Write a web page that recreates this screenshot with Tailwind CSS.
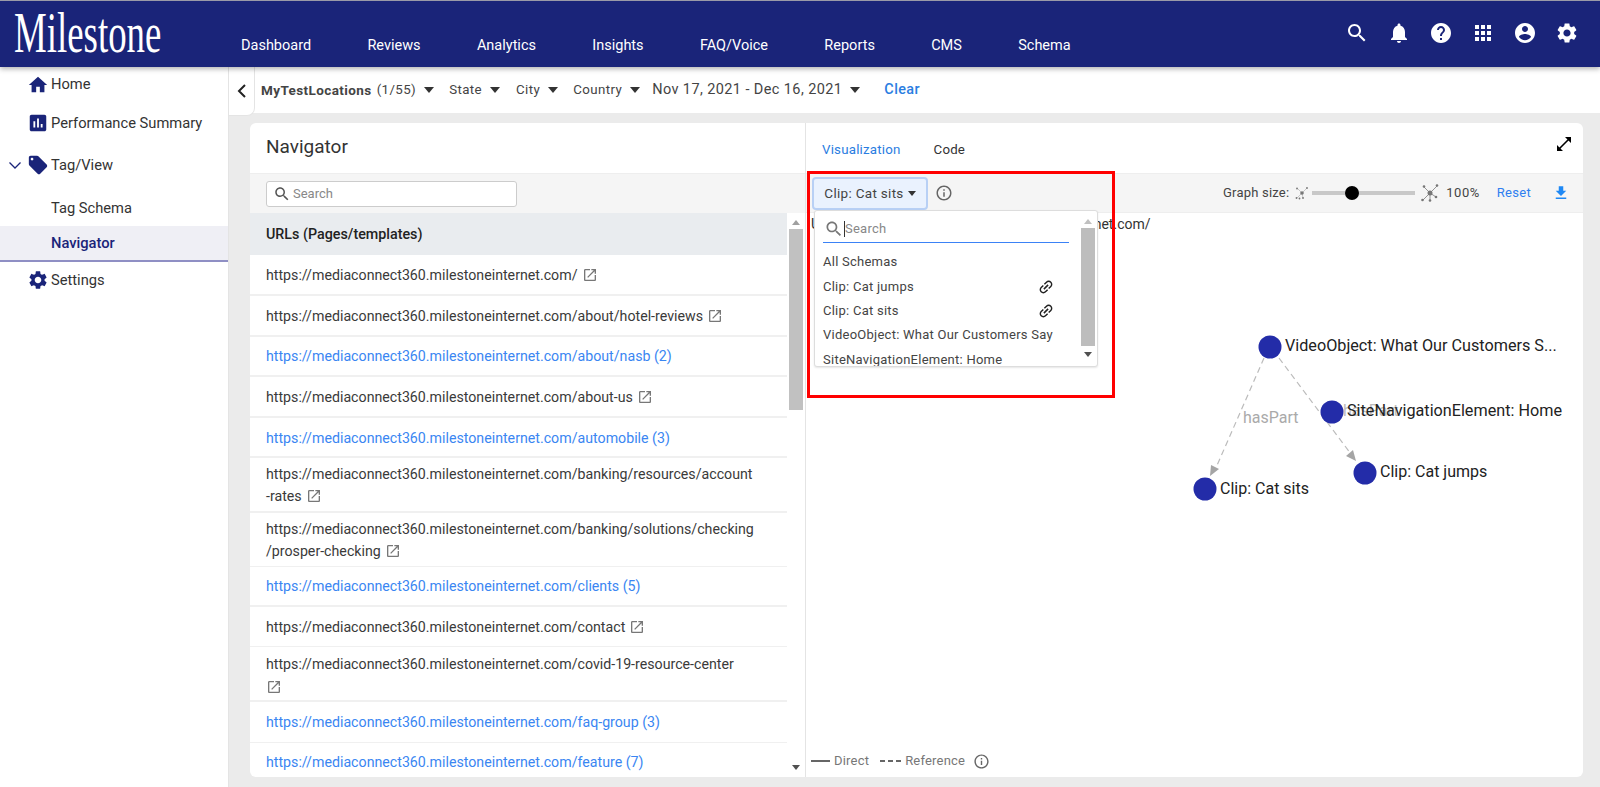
<!DOCTYPE html>
<html lang="en">

<head>
    <meta charset="UTF-8">
    <meta name="viewport" content="width=device-width, initial-scale=1.0">
    <title>Milestone - Navigator</title>
    <script src="https://cdn.jsdelivr.net/npm/@tailwindcss/browser@4"></script>
</head>

<body class="h-[787px] overflow-hidden bg-[#ebebeb] font-[Roboto,sans-serif] text-[#333]">
    <!-- Top bar -->
    <header class="relative z-20 h-[67px] bg-[#1a2479] border-t border-[#9a9aa8] shadow-[0_2px_5px_rgba(0,0,0,0.3)] flex text-white">
        <div class="w-[241px] shrink-0 pl-[14px] pt-[1px]">
            <div class="w-[232px] text-[58px] leading-[62px] font-['Liberation_Serif',serif] origin-left scale-x-[0.635] whitespace-nowrap">Milestone</div>
        </div>
        <nav class="flex gap-[56.3px] pt-[35px] text-[14.5px] leading-[20px]">
            <span>Dashboard</span>
            <span>Reviews</span>
            <span>Analytics</span>
            <span>Insights</span>
            <span>FAQ/Voice</span>
            <span>Reports</span>
            <span>CMS</span>
            <span>Schema</span>
        </nav>
        <div class="ml-auto flex gap-[18px] pt-[20px] pr-[21px]">
            <svg class="w-6 h-6 fill-white" viewBox="0 0 24 24"><path d="M15.5 14h-.79l-.28-.27C15.41 12.59 16 11.11 16 9.5 16 5.91 13.09 3 9.5 3S3 5.91 3 9.5 5.91 16 9.5 16c1.61 0 3.09-.59 4.23-1.57l.27.28v.79l5 4.99L20.49 19l-4.99-5zm-6 0C7.01 14 5 11.99 5 9.5S7.01 5 9.5 5 14 7.01 14 9.5 11.99 14 9.5 14z"/></svg>
            <svg class="w-6 h-6 fill-white" viewBox="0 0 24 24"><path d="M12 22c1.1 0 2-.9 2-2h-4c0 1.1.89 2 2 2zm6-6v-5c0-3.07-1.64-5.64-4.5-6.32V4c0-.83-.67-1.5-1.5-1.5s-1.5.67-1.5 1.5v.68C7.63 5.36 6 7.92 6 11v5l-2 2v1h16v-1l-2-2z"/></svg>
            <svg class="w-6 h-6 fill-white" viewBox="0 0 24 24"><path d="M12 2C6.48 2 2 6.48 2 12s4.48 10 10 10 10-4.48 10-10S17.52 2 12 2zm1 17h-2v-2h2v2zm2.07-7.75l-.9.92C13.45 12.9 13 13.5 13 15h-2v-.5c0-1.1.45-2.1 1.17-2.83l1.24-1.26c.37-.36.59-.86.59-1.41 0-1.1-.9-2-2-2s-2 .9-2 2H8c0-2.21 1.79-4 4-4s4 1.79 4 4c0 .88-.36 1.68-.93 2.25z"/></svg>
            <svg class="w-6 h-6 fill-white" viewBox="0 0 24 24"><path d="M4 8h4V4H4v4zm6 12h4v-4h-4v4zm-6 0h4v-4H4v4zm0-6h4v-4H4v4zm6 0h4v-4h-4v4zm6-10v4h4V4h-4zm-6 4h4V4h-4v4zm6 6h4v-4h-4v4zm0 6h4v-4h-4v4z"/></svg>
            <svg class="w-6 h-6 fill-white" viewBox="0 0 24 24"><path d="M12 2C6.48 2 2 6.48 2 12s4.48 10 10 10 10-4.48 10-10S17.52 2 12 2zm0 3c1.66 0 3 1.34 3 3s-1.34 3-3 3-3-1.34-3-3 1.34-3 3-3zm0 14.2c-2.5 0-4.71-1.28-6-3.22.03-1.99 4-3.08 6-3.08 1.99 0 5.97 1.09 6 3.08-1.29 1.94-3.5 3.22-6 3.22z"/></svg>
            <svg class="w-6 h-6 fill-white" viewBox="0 0 24 24"><path d="M19.14 12.94c.04-.3.06-.61.06-.94 0-.32-.02-.64-.07-.94l2.03-1.58c.18-.14.23-.41.12-.61l-1.92-3.32c-.12-.22-.37-.29-.59-.22l-2.39.96c-.5-.38-1.03-.7-1.62-.94l-.36-2.54c-.04-.24-.24-.41-.48-.41h-3.84c-.24 0-.43.17-.47.41l-.36 2.54c-.59.24-1.13.57-1.62.94l-2.39-.96c-.22-.08-.47 0-.59.22L2.74 8.87c-.12.21-.08.47.12.61l2.03 1.58c-.05.3-.09.63-.09.94s.02.64.07.94l-2.03 1.58c-.18.14-.23.41-.12.61l1.92 3.32c.12.22.37.29.59.22l2.39-.96c.5.38 1.03.7 1.62.94l.36 2.54c.05.24.24.41.48.41h3.84c.24 0 .44-.17.47-.41l.36-2.54c.59-.24 1.13-.56 1.62-.94l2.39.96c.22.08.47 0 .59-.22l1.92-3.32c.12-.22.07-.47-.12-.61l-2.01-1.58zM12 15.6c-1.98 0-3.6-1.62-3.6-3.6s1.62-3.6 3.6-3.6 3.6 1.62 3.6 3.6-1.62 3.6-3.6 3.6z"/></svg>
        </div>
    </header>

    <div class="flex h-[720px]">
        <!-- Sidebar -->
        <aside class="relative z-10 w-[229px] shrink-0 bg-white border-r border-[#e4e4e4] text-[14.7px] text-[#333]">
            <div class="h-[36px] pb-[1px] pl-[27px] flex items-center gap-[2px]">
                <svg class="w-[22px] h-[22px] fill-[#1a2479]" viewBox="0 0 24 24"><path d="M10 20v-6h4v6h5v-8h3L12 3 2 12h3v8z"/></svg>
                <span>Home</span>
            </div>
            <div class="h-[40px] pl-[27px] flex items-center gap-[2px]">
                <svg class="w-[22px] h-[22px] fill-[#1a2479]" viewBox="0 0 24 24"><path d="M19 3H5c-1.1 0-2 .9-2 2v14c0 1.1.9 2 2 2h14c1.1 0 2-.9 2-2V5c0-1.1-.9-2-2-2zM9 17H7v-7h2v7zm4 0h-2V7h2v10zm4 0h-2v-4h2v4z"/></svg>
                <span>Performance Summary</span>
            </div>
            <div class="h-[44px] pl-[8px] flex items-center">
                <svg class="w-[14px] h-[14px] stroke-[#1a2479] fill-none" viewBox="0 0 14 14"><path d="M1.5 4.5 7 10l5.5-5.5" stroke-width="1.3"/></svg>
                <svg class="ml-[5px] w-[22px] h-[22px] fill-[#1a2479]" viewBox="0 0 24 24"><path d="M21.41 11.58l-9-9C12.05 2.22 11.55 2 11 2H4c-1.1 0-2 .9-2 2v7c0 .55.22 1.05.59 1.42l9 9c.36.36.86.58 1.41.58.55 0 1.05-.22 1.41-.59l7-7c.37-.36.59-.86.59-1.41 0-.55-.23-1.06-.59-1.42zM5.5 7C4.67 7 4 6.33 4 5.5S4.67 4 5.5 4 7 4.67 7 5.5 6.33 7 5.5 7z"/></svg>
                <span class="ml-[2px]">Tag/View</span>
            </div>
            <div class="h-[39px] pt-[4px] pl-[51px] flex items-center">Tag Schema</div>
            <div class="h-[36px] pt-[1px] pl-[51px] flex items-center bg-[#efeff5] border-b-2 border-[#8f8fc4] text-[#1a2479] font-medium">Navigator</div>
            <div class="h-[36px] pl-[27px] flex items-center gap-[2px]">
                <svg class="w-[22px] h-[22px] fill-[#1a2479]" viewBox="0 0 24 24"><path d="M19.14 12.94c.04-.3.06-.61.06-.94 0-.32-.02-.64-.07-.94l2.03-1.58c.18-.14.23-.41.12-.61l-1.92-3.32c-.12-.22-.37-.29-.59-.22l-2.39.96c-.5-.38-1.03-.7-1.62-.94l-.36-2.54c-.04-.24-.24-.41-.48-.41h-3.84c-.24 0-.43.17-.47.41l-.36 2.54c-.59.24-1.13.57-1.62.94l-2.39-.96c-.22-.08-.47 0-.59.22L2.74 8.87c-.12.21-.08.47.12.61l2.03 1.58c-.05.3-.09.63-.09.94s.02.64.07.94l-2.03 1.58c-.18.14-.23.41-.12.61l1.92 3.32c.12.22.37.29.59.22l2.39-.96c.5.38 1.03.7 1.62.94l.36 2.54c.05.24.24.41.48.41h3.84c.24 0 .44-.17.47-.41l.36-2.54c.59-.24 1.13-.56 1.62-.94l2.39.96c.22.08.47 0 .59-.22l1.92-3.32c.12-.22.07-.47-.12-.61l-2.01-1.58zM12 15.6c-1.98 0-3.6-1.62-3.6-3.6s1.62-3.6 3.6-3.6 3.6 1.62 3.6 3.6-1.62 3.6-3.6 3.6z"/></svg>
                <span>Settings</span>
            </div>
        </aside>

        <main class="flex-1 min-w-0 relative">
            <!-- Filter bar -->
            <div class="h-[46px] bg-white flex items-center text-[13.3px] tracking-[0.4px] text-[#444]">
                <div class="w-[26px] h-[49px] self-start shrink-0 bg-white border-r border-b border-[#e4e4e4] rounded-br-[8px] flex items-center justify-center">
                    <svg class="w-[14px] h-[16px] stroke-[#222] fill-none" viewBox="0 0 14 16"><path d="M10 2 4 8l6 6" stroke-width="2"/></svg>
                </div>
                <span class="ml-[6px] font-bold text-[13.5px]">MyTestLocations</span>
                <span class="ml-[5px]">(1/55)</span>
                <span class="ml-[8px] w-0 h-0 border-x-[5px] border-x-transparent border-t-[6px] border-t-[#333]"></span>
                <span class="ml-[15px]">State</span>
                <span class="ml-[8px] w-0 h-0 border-x-[5px] border-x-transparent border-t-[6px] border-t-[#333]"></span>
                <span class="ml-[16px]">City</span>
                <span class="ml-[8px] w-0 h-0 border-x-[5px] border-x-transparent border-t-[6px] border-t-[#333]"></span>
                <span class="ml-[15px]">Country</span>
                <span class="ml-[8px] w-0 h-0 border-x-[5px] border-x-transparent border-t-[6px] border-t-[#333]"></span>
                <span class="ml-[12px] text-[14.5px]">Nov 17, 2021 - Dec 16, 2021</span>
                <span class="ml-[8px] w-0 h-0 border-x-[5px] border-x-transparent border-t-[6px] border-t-[#333]"></span>
                <span class="ml-[24px] text-[14.4px] font-medium text-[#2a7de1]">Clear</span>
            </div>

            <!-- Card -->
            <div class="ml-[21px] mr-[17px] mt-[10px] h-[654px] bg-white rounded-[6px] flex overflow-hidden">
                <!-- Navigator panel -->
                <section class="w-[556px] shrink-0 border-r border-[#e4e4e4] flex flex-col">
                    <div class="h-[50px] shrink-0 pl-[16px] pb-[2px] flex items-center text-[19px] text-[#333]">Navigator</div>
                    <div class="h-[40px] shrink-0 bg-[#f5f5f5] pl-[16px] flex items-center border-t border-[#eee]">
                        <div class="w-[251px] h-[26px] bg-white border border-[#ccc] rounded-[3px] flex items-center pl-[6px] gap-[2px] text-[13px] text-[#888]">
                            <svg class="w-[18px] h-[18px] fill-[#555]" viewBox="0 0 24 24"><path d="M15.5 14h-.79l-.28-.27C15.41 12.59 16 11.11 16 9.5 16 5.91 13.09 3 9.5 3S3 5.91 3 9.5 5.91 16 9.5 16c1.61 0 3.09-.59 4.23-1.57l.27.28v.79l5 4.99L20.49 19l-4.99-5zm-6 0C7.01 14 5 11.99 5 9.5S7.01 5 9.5 5 14 7.01 14 9.5 11.99 14 9.5 14z"/></svg>
                            <span>Search</span>
                        </div>
                    </div>
                    <div class="flex-1 min-h-0 flex">
                        <div class="w-[537px] shrink-0 text-[14.2px] text-[#3a3a3a] leading-[22px]">
                            <div class="h-[42px] bg-[#e9ecef] pl-[16px] flex items-center font-medium text-[14.3px] text-[#222]">URLs (Pages/templates)</div>
                            <div class="h-[41px] pl-[16px] flex items-center border-b-2 border-[#f0f0f0]">https://mediaconnect360.milestoneinternet.com/<svg class="ml-[4px] w-[16px] h-[16px] fill-[#777]" viewBox="0 0 24 24"><path d="M19 19H5V5h7V3H5c-1.11 0-2 .9-2 2v14c0 1.1.89 2 2 2h14c1.1 0 2-.9 2-2v-7h-2v7zM14 3v2h3.59l-9.83 9.83 1.41 1.41L19 6.41V10h2V3h-7z"/></svg></div>
                            <div class="h-[41px] pl-[16px] flex items-center border-b-2 border-[#f0f0f0]">https://mediaconnect360.milestoneinternet.com/about/hotel-reviews<svg class="ml-[4px] w-[16px] h-[16px] fill-[#777]" viewBox="0 0 24 24"><path d="M19 19H5V5h7V3H5c-1.11 0-2 .9-2 2v14c0 1.1.89 2 2 2h14c1.1 0 2-.9 2-2v-7h-2v7zM14 3v2h3.59l-9.83 9.83 1.41 1.41L19 6.41V10h2V3h-7z"/></svg></div>
                            <div class="h-[40px] pl-[16px] flex items-center border-b-2 border-[#f0f0f0] text-[#3a86f2]">https://mediaconnect360.milestoneinternet.com/about/nasb (2)</div>
                            <div class="h-[41px] pl-[16px] pt-[1px] flex items-center border-b-2 border-[#f0f0f0]">https://mediaconnect360.milestoneinternet.com/about-us<svg class="ml-[4px] w-[16px] h-[16px] fill-[#777]" viewBox="0 0 24 24"><path d="M19 19H5V5h7V3H5c-1.11 0-2 .9-2 2v14c0 1.1.89 2 2 2h14c1.1 0 2-.9 2-2v-7h-2v7zM14 3v2h3.59l-9.83 9.83 1.41 1.41L19 6.41V10h2V3h-7z"/></svg></div>
                            <div class="h-[40px] pl-[16px] pt-[1px] flex items-center border-b-2 border-[#f0f0f0] text-[#3a86f2]">https://mediaconnect360.milestoneinternet.com/automobile (3)</div>
                            <div class="h-[55px] pl-[16px] pr-[30px] flex flex-col justify-center border-b-2 border-[#f0f0f0]">
                                <span>https://mediaconnect360.milestoneinternet.com/banking/resources/account</span>
                                <span class="flex items-center">-rates<svg class="ml-[4px] w-[16px] h-[16px] fill-[#777]" viewBox="0 0 24 24"><path d="M19 19H5V5h7V3H5c-1.11 0-2 .9-2 2v14c0 1.1.89 2 2 2h14c1.1 0 2-.9 2-2v-7h-2v7zM14 3v2h3.59l-9.83 9.83 1.41 1.41L19 6.41V10h2V3h-7z"/></svg></span>
                            </div>
                            <div class="h-[54px] pl-[16px] pr-[30px] flex flex-col justify-center border-b border-[#f0f0f0]">
                                <span>https://mediaconnect360.milestoneinternet.com/banking/solutions/checking</span>
                                <span class="flex items-center">/prosper-checking<svg class="ml-[4px] w-[16px] h-[16px] fill-[#777]" viewBox="0 0 24 24"><path d="M19 19H5V5h7V3H5c-1.11 0-2 .9-2 2v14c0 1.1.89 2 2 2h14c1.1 0 2-.9 2-2v-7h-2v7zM14 3v2h3.59l-9.83 9.83 1.41 1.41L19 6.41V10h2V3h-7z"/></svg></span>
                            </div>
                            <div class="h-[40px] pl-[16px] flex items-center border-b-2 border-[#f0f0f0] text-[#3a86f2]">https://mediaconnect360.milestoneinternet.com/clients (5)</div>
                            <div class="h-[40px] pl-[16px] flex items-center border-b border-[#f0f0f0]">https://mediaconnect360.milestoneinternet.com/contact<svg class="ml-[4px] w-[16px] h-[16px] fill-[#777]" viewBox="0 0 24 24"><path d="M19 19H5V5h7V3H5c-1.11 0-2 .9-2 2v14c0 1.1.89 2 2 2h14c1.1 0 2-.9 2-2v-7h-2v7zM14 3v2h3.59l-9.83 9.83 1.41 1.41L19 6.41V10h2V3h-7z"/></svg></div>
                            <div class="h-[55px] pl-[16px] pr-[30px] pt-[6px] flex flex-col border-b-2 border-[#f0f0f0]">
                                <span>https://mediaconnect360.milestoneinternet.com/covid-19-resource-center</span>
                                <svg class="mt-[4px] w-[16px] h-[16px] fill-[#777]" viewBox="0 0 24 24"><path d="M19 19H5V5h7V3H5c-1.11 0-2 .9-2 2v14c0 1.1.89 2 2 2h14c1.1 0 2-.9 2-2v-7h-2v7zM14 3v2h3.59l-9.83 9.83 1.41 1.41L19 6.41V10h2V3h-7z"/></svg>
                            </div>
                            <div class="h-[41px] pl-[16px] flex items-center border-b border-[#f0f0f0] text-[#3a86f2]">https://mediaconnect360.milestoneinternet.com/faq-group (3)</div>
                            <div class="h-[40px] pl-[16px] pb-[3px] flex items-center text-[#3a86f2]">https://mediaconnect360.milestoneinternet.com/feature (7)</div>
                        </div>
                        <!-- list scrollbar -->
                        <div class="w-[18px] shrink-0 flex flex-col items-center pt-[7px] pb-[7px]">
                            <span class="w-0 h-0 border-x-[4px] border-x-transparent border-b-[5px] border-b-[#a0a0a0]"></span>
                            <span class="mt-[4px] w-[14px] h-[181px] bg-[#c1c1c1]"></span>
                            <span class="mt-auto w-0 h-0 border-x-[4px] border-x-transparent border-t-[5px] border-t-[#505050]"></span>
                        </div>
                    </div>
                </section>

                <!-- Graph panel -->
                <section class="flex-1 min-w-0 flex flex-col relative">
                    <div class="h-[50px] shrink-0 pl-[16px] pt-[17px] flex gap-[33px] text-[13.3px] leading-[20px] tracking-[0.2px]">
                        <span class="text-[#2a7de1]">Visualization</span>
                        <span>Code</span>
                        <svg class="ml-auto mr-[9px] -mt-[6px] w-[20px] h-[20px] stroke-black fill-none" viewBox="0 0 20 20"><path d="M4 16 16 4" stroke-width="1.6"/><path d="M11 3h6v6L11 3zM3 11v6h6L3 11z" fill="#000" stroke="none"/></svg>
                    </div>
                    <div class="h-[40px] shrink-0 bg-[#f5f5f5] border-y border-[#eee] flex items-center pl-[6px] pr-[13px] text-[13px] text-[#444]">
                        <div class="w-[116px] h-[33px] -mb-[1px] flex items-center justify-center gap-[4px] bg-[#eaf2fe] border-2 border-[#b8d0f5] rounded-[4px] text-[13.5px] tracking-[0.3px]">
                            <span>Clip: Cat sits</span>
                            <span class="w-0 h-0 border-x-[4px] border-x-transparent border-t-[5px] border-t-[#333]"></span>
                        </div>
                        <svg class="ml-[7px] w-[18px] h-[18px] fill-[#666]" viewBox="0 0 24 24"><path d="M11 7h2v2h-2zm0 4h2v6h-2zm1-9C6.48 2 2 6.48 2 12s4.48 10 10 10 10-4.48 10-10S17.52 2 12 2zm0 18c-4.41 0-8-3.59-8-8s3.59-8 8-8 8 3.59 8 8-3.59 8-8 8z"/></svg>
                        <span class="ml-auto tracking-[0.2px]">Graph size:</span>
                        <svg class="ml-[6px] w-[14px] h-[14px] fill-[#777] stroke-[#999]" viewBox="0 0 14 14"><path d="M2 2 7 7M12 2 7 7M2 12 7 7M8 12 7 7" stroke-width="0.5"/><circle cx="7" cy="7" r="1.8" stroke="none"/><circle cx="2" cy="2.5" r=".9" stroke="none"/><circle cx="12" cy="2" r=".9" stroke="none"/><circle cx="1.5" cy="12" r=".9" stroke="none"/><circle cx="4.5" cy="12.5" r=".9" stroke="none"/><circle cx="8" cy="12" r=".9" stroke="none"/></svg>
                        <div class="relative ml-[3px] w-[103px] h-[4px] bg-[#c8c8c8]">
                            <span class="absolute left-[33px] -top-[5px] w-[14px] h-[14px] rounded-full bg-black"></span>
                        </div>
                        <svg class="ml-[6px] w-[18px] h-[18px] fill-[#777] stroke-[#888]" viewBox="0 0 18 18"><path d="M2 2 9 9M16 2 9 9M2 16 9 9M9 17V9M9 9 15 13" stroke-width="0.9"/><circle cx="9" cy="9" r="2.5" stroke="none"/><circle cx="3" cy="2.5" r="1.3" stroke="none"/><circle cx="16" cy="1.5" r="1.3" stroke="none"/><circle cx="1.5" cy="16" r="1.3" stroke="none"/><circle cx="9" cy="16.5" r="1.3" stroke="none"/><circle cx="15" cy="13" r="1.3" stroke="none"/></svg>
                        <span class="ml-[7px] tracking-[0.5px]">100%</span>
                        <span class="ml-[17px] text-[#2f7ff0] tracking-[0.3px]">Reset</span>
                        <svg class="ml-[21px] w-[18px] h-[18px] fill-[#1e88f5]" viewBox="0 0 24 24"><path d="M19 9h-4V3H9v6H5l7 7 7-7zM5 18v2h14v-2H5z"/></svg>
                    </div>
                    <!-- Graph canvas -->
                    <div class="flex-1 min-h-0 relative">
                        <div class="absolute left-[5px] top-[1px] text-[14px] leading-[20px] whitespace-nowrap">URL: https://mediaconnect360.milestoneinternet.com/</div>
                        <svg class="absolute left-0 top-0 w-[777px] h-[564px]" viewBox="806 213 777 564" font-family="Roboto, sans-serif">
                            <path d="M1264 358 1215 470" stroke="#bbb" stroke-width="1.2" stroke-dasharray="6 4" fill="none"/>
                            <path d="M1279 358 1354 458" stroke="#bbb" stroke-width="1.2" stroke-dasharray="6 4" fill="none"/>
                            <path d="M1210 476 1211 465 1219 469z" fill="#a5a5a5"/>
                            <path d="M1356 461 1346 456 1353 450z" fill="#a5a5a5"/>
                            <text x="1243" y="423" font-size="16" fill="#aaa">hasPart</text>
                            <text x="1343" y="416" font-size="16" fill="#bbb">hasPart</text>
                            <circle cx="1270" cy="347" r="11.5" fill="#232ca8"/>
                            <circle cx="1332" cy="412" r="11.5" fill="#232ca8"/>
                            <circle cx="1365" cy="473" r="11.5" fill="#232ca8"/>
                            <circle cx="1205" cy="489" r="11.5" fill="#232ca8"/>
                            <text x="1285" y="351" font-size="16.2" fill="#222">VideoObject: What Our Customers S...</text>
                            <text x="1347" y="416" font-size="16.2" fill="#222">SiteNavigationElement: Home</text>
                            <text x="1380" y="477" font-size="16" fill="#222">Clip: Cat jumps</text>
                            <text x="1220" y="494" font-size="16" fill="#222">Clip: Cat sits</text>
                        </svg>
                        <!-- Legend -->
                        <div class="absolute left-[5px] bottom-[7px] flex items-center text-[13px] leading-[18px] text-[#777] tracking-[0.2px]">
                            <span class="w-[19px] h-[2px] bg-[#666]"></span>
                            <span class="ml-[4px]">Direct</span>
                            <span class="ml-[11px] w-[5px] h-[2px] bg-[#666]"></span>
                            <span class="ml-[3px] w-[5px] h-[2px] bg-[#666]"></span>
                            <span class="ml-[3px] w-[5px] h-[2px] bg-[#666]"></span>
                            <span class="ml-[4px]">Reference</span>
                            <svg class="ml-[8px] w-[17px] h-[17px] fill-[#666]" viewBox="0 0 24 24"><path d="M11 7h2v2h-2zm0 4h2v6h-2zm1-9C6.48 2 2 6.48 2 12s4.48 10 10 10 10-4.48 10-10S17.52 2 12 2zm0 18c-4.41 0-8-3.59-8-8s3.59-8 8-8 8 3.59 8 8-3.59 8-8 8z"/></svg>
                        </div>

                        <!-- Schema dropdown -->
                        <div class="absolute left-[8px] -top-[3px] w-[284px] h-[157px] bg-white border border-[#ddd] rounded-[3px] shadow-[0_1px_2px_rgba(0,0,0,0.1)] flex overflow-hidden text-[13px] tracking-[0.25px] text-[#444]">
                            <div class="flex-1 min-w-0 pl-[8px] pr-[10px]">
                                <div class="h-[32px] pt-[4px] flex items-center border-b border-[#3b82f6] text-[#888]">
                                    <svg class="ml-[1px] w-[20px] h-[20px] fill-[#777]" viewBox="0 0 24 24"><path d="M15.5 14h-.79l-.28-.27C15.41 12.59 16 11.11 16 9.5 16 5.91 13.09 3 9.5 3S3 5.91 3 9.5 5.91 16 9.5 16c1.61 0 3.09-.59 4.23-1.57l.27.28v.79l5 4.99L20.49 19l-4.99-5zm-6 0C7.01 14 5 11.99 5 9.5S7.01 5 9.5 5 14 7.01 14 9.5 11.99 14 9.5 14z"/></svg>
                                    <span class="border-l border-[#333] leading-[16px]">Search</span>
                                </div>
                                <div class="mt-[7px] h-[24px] flex items-center">All Schemas</div>
                                <div class="h-[25px] flex items-center justify-between pr-[14px]">Clip: Cat jumps
                                    <svg class="w-[18px] h-[18px] fill-[#222] -rotate-45" viewBox="0 0 24 24"><path d="M3.9 12c0-1.71 1.39-3.1 3.1-3.1h4V7H7c-2.76 0-5 2.24-5 5s2.24 5 5 5h4v-1.9H7c-1.71 0-3.1-1.39-3.1-3.1zM8 13h8v-2H8v2zm9-6h-4v1.9h4c1.71 0 3.1 1.39 3.1 3.1s-1.39 3.1-3.1 3.1h-4V17h4c2.76 0 5-2.24 5-5s-2.24-5-5-5z"/></svg>
                                </div>
                                <div class="h-[24px] flex items-center justify-between pr-[14px]">Clip: Cat sits
                                    <svg class="w-[18px] h-[18px] fill-[#222] -rotate-45" viewBox="0 0 24 24"><path d="M3.9 12c0-1.71 1.39-3.1 3.1-3.1h4V7H7c-2.76 0-5 2.24-5 5s2.24 5 5 5h4v-1.9H7c-1.71 0-3.1-1.39-3.1-3.1zM8 13h8v-2H8v2zm9-6h-4v1.9h4c1.71 0 3.1 1.39 3.1 3.1s-1.39 3.1-3.1 3.1h-4V17h4c2.76 0 5-2.24 5-5s-2.24-5-5-5z"/></svg>
                                </div>
                                <div class="h-[24px] flex items-center whitespace-nowrap">VideoObject: What Our Customers Say</div>
                                <div class="h-[25px] flex items-center whitespace-nowrap">SiteNavigationElement: Home</div>
                            </div>
                            <div class="w-[17px] mr-[1px] shrink-0 flex flex-col items-center pt-[8px] pb-[9px]">
                                <span class="w-0 h-0 border-x-[4px] border-x-transparent border-b-[5px] border-b-[#c0c0c0]"></span>
                                <span class="mt-[4px] w-[14px] h-[118px] bg-[#bdbdbd]"></span>
                                <span class="mt-auto w-0 h-0 border-x-[4px] border-x-transparent border-t-[5px] border-t-[#505050]"></span>
                            </div>
                        </div>
                    </div>
                </section>
            </div>

            <!-- Highlight annotation -->
            <div class="absolute left-[578px] top-[104px] w-[308px] h-[227px] border-[3px] border-[#ff0000] pointer-events-none"></div>
        </main>
    </div>
</body>

</html>
